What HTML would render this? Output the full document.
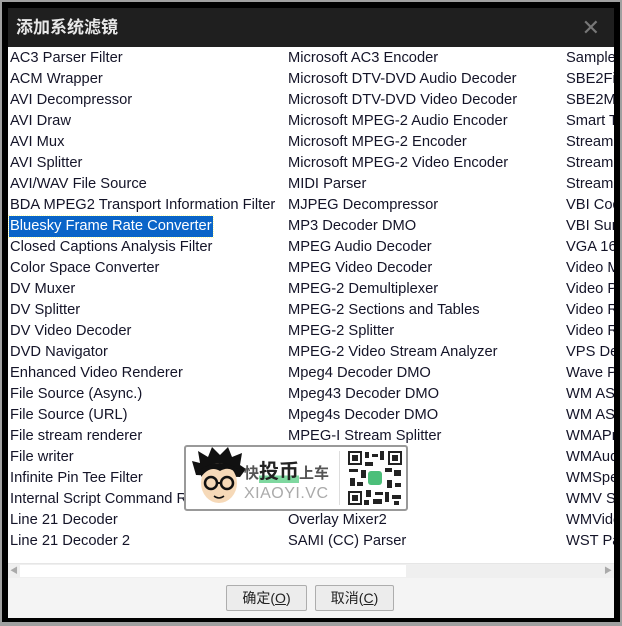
<!DOCTYPE html>
<html><head><meta charset="utf-8"><style>
*{margin:0;padding:0;box-sizing:border-box}
body{width:622px;height:626px;background:#a0a0a0;position:relative;overflow:hidden;font-family:"Liberation Sans","Noto Sans CJK SC",sans-serif}
.frame{position:absolute;left:2px;top:2px;width:618px;height:620px;background:#000}
.title{position:absolute;left:8px;top:8px;width:606px;height:39px;background:#1f1f1f;color:#e8e8e8;font-size:17px;font-weight:bold;line-height:39px;padding-left:8px}
.x{position:absolute;right:14px;top:0;color:#777;font-size:22px;font-weight:normal}
.list{position:absolute;left:8px;top:47px;width:606px;height:516px;background:#fff;overflow:hidden}
.col{position:absolute;top:1px;white-space:nowrap;font-size:14.7px;color:#141428}
.col div{height:21px;line-height:21px;padding-left:2px}
.sel{background:#0a64c8;color:#fff;display:inline-block;outline:1px dotted #ffa;padding:0 1px;margin-left:-1px}
.sb{position:absolute;left:8px;top:563px;width:606px;height:15px;background:#efefef;border-top:1px solid #e6e6e6}
.thumb{position:absolute;left:12px;top:1px;width:386px;height:12px;background:#fff}
.ar{position:absolute;top:1px;width:10px;height:12px;color:#aaa;font-size:8px;line-height:12px;text-align:center}
.bottom{position:absolute;left:8px;top:578px;width:606px;height:40px;background:#f4f4f4}
.btn{position:absolute;top:7px;height:26px;border:1px solid #adadad;background:#ececec;font-size:14px;line-height:24px;text-align:center;color:#222;border-radius:2px}
.wm{position:absolute;left:184px;top:445px;width:224px;height:66px;background:#fff;border:2px solid #999;border-radius:3px}
</style></head><body>
<div class="frame"></div>
<div class="title">添加系统滤镜<span class="x">✕</span></div>
<div class="list">
<div class="col" style="left:0">
<div>AC3 Parser Filter</div><div>ACM Wrapper</div><div>AVI Decompressor</div><div>AVI Draw</div><div>AVI Mux</div><div>AVI Splitter</div><div>AVI/WAV File Source</div><div>BDA MPEG2 Transport Information Filter</div><div><span class="sel">Bluesky Frame Rate Converter</span></div><div>Closed Captions Analysis Filter</div><div>Color Space Converter</div><div>DV Muxer</div><div>DV Splitter</div><div>DV Video Decoder</div><div>DVD Navigator</div><div>Enhanced Video Renderer</div><div>File Source (Async.)</div><div>File Source (URL)</div><div>File stream renderer</div><div>File writer</div><div>Infinite Pin Tee Filter</div><div>Internal Script Command Renderer</div><div>Line 21 Decoder</div><div>Line 21 Decoder 2</div>
</div>
<div class="col" style="left:278px">
<div>Microsoft AC3 Encoder</div><div>Microsoft DTV-DVD Audio Decoder</div><div>Microsoft DTV-DVD Video Decoder</div><div>Microsoft MPEG-2 Audio Encoder</div><div>Microsoft MPEG-2 Encoder</div><div>Microsoft MPEG-2 Video Encoder</div><div>MIDI Parser</div><div>MJPEG Decompressor</div><div>MP3 Decoder DMO</div><div>MPEG Audio Decoder</div><div>MPEG Video Decoder</div><div>MPEG-2 Demultiplexer</div><div>MPEG-2 Sections and Tables</div><div>MPEG-2 Splitter</div><div>MPEG-2 Video Stream Analyzer</div><div>Mpeg4 Decoder DMO</div><div>Mpeg43 Decoder DMO</div><div>Mpeg4s Decoder DMO</div><div>MPEG-I Stream Splitter</div><div>Multi-file Parser</div><div>Null Renderer</div><div>Overlay Mixer</div><div>Overlay Mixer2</div><div>SAMI (CC) Parser</div>
</div>
<div class="col" style="left:556px">
<div>Sample Grabber</div><div>SBE2FileScan</div><div>SBE2MediaTypeProfile</div><div>Smart Tee</div><div>Stream Buffer Sink</div><div>Stream Buffer Source</div><div>StreamBufferSink</div><div>VBI Codec</div><div>VBI Surface Allocator</div><div>VGA 16 Color Ditherer</div><div>Video Mixing Renderer</div><div>Video Port Manager</div><div>Video Renderer</div><div>Video Renderer</div><div>VPS Decoder</div><div>Wave Parser</div><div>WM ASF Reader</div><div>WM ASF Writer</div><div>WMAPro over S/PDIF</div><div>WMAudio Decoder DMO</div><div>WMSpeech Decoder</div><div>WMV Screen</div><div>WMVideo Decoder DMO</div><div>WST Pager</div>
</div>
</div>
<div class="sb"><div class="ar" style="left:1px">◀</div><div class="thumb"></div><div class="ar" style="right:1px">▶</div></div>
<div class="bottom">
<div class="btn" style="left:218px;width:81px">确定(<u>O</u>)</div>
<div class="btn" style="left:307px;width:79px">取消(<u>C</u>)</div>
</div>
<div class="wm">
<svg width="58" height="62" style="position:absolute;left:4px;top:0" viewBox="0 0 58 62">
<path d="M6 28 L2 14 L10 16 L8 4 L18 10 L22 0 L30 8 L38 0 L42 10 L52 6 L50 18 L56 22 L50 30 Z" fill="#111"/>
<ellipse cx="29" cy="36" rx="18" ry="20" fill="#f6d9b8"/>
<path d="M11 30 Q20 18 30 24 Q40 18 48 28 L48 22 Q30 10 11 22 Z" fill="#111"/>
<circle cx="21" cy="36" r="6" fill="none" stroke="#111" stroke-width="2.5"/>
<circle cx="37" cy="36" r="6" fill="none" stroke="#111" stroke-width="2.5"/>
<line x1="27" y1="36" x2="31" y2="36" stroke="#111" stroke-width="2"/>
<path d="M24 49 Q29 53 34 49" stroke="#111" fill="none" stroke-width="1.5"/>
</svg>
<div style="position:absolute;left:58px;top:8px;font-size:15px;font-weight:bold;color:#555;white-space:nowrap">快<span style="font-size:20px;color:#222;background:linear-gradient(transparent 65%,#7fd8a0 65%)">投币</span>上车</div>
<div style="position:absolute;left:58px;top:38px;font-size:16px;color:#aaa;letter-spacing:0.5px">XIAOYI.VC</div>
<div style="position:absolute;left:153px;top:4px;width:1px;height:54px;background:#ddd"></div>
<svg width="56" height="56" style="position:absolute;left:161px;top:3px" viewBox="0 0 56 56">
<rect x="0" y="0" width="56" height="56" fill="#fff"/>
<g fill="#222"><rect x="1" y="1" width="14" height="14"/><rect x="41" y="1" width="14" height="14"/><rect x="1" y="41" width="14" height="14"/></g>
<g fill="#fff"><rect x="3" y="3" width="10" height="10"/><rect x="43" y="3" width="10" height="10"/><rect x="3" y="43" width="10" height="10"/></g>
<g fill="#222"><rect x="5" y="5" width="6" height="6"/><rect x="45" y="5" width="6" height="6"/><rect x="5" y="45" width="6" height="6"/>
<rect x="18" y="2" width="4" height="6"/><rect x="25" y="4" width="6" height="3"/><rect x="33" y="1" width="4" height="9"/><rect x="18" y="12" width="8" height="4"/><rect x="2" y="19" width="9" height="3"/><rect x="14" y="20" width="5" height="8"/><rect x="38" y="18" width="7" height="4"/><rect x="47" y="20" width="7" height="6"/><rect x="3" y="28" width="5" height="8"/><rect x="10" y="32" width="6" height="4"/><rect x="40" y="30" width="5" height="8"/><rect x="48" y="33" width="6" height="4"/><rect x="19" y="40" width="5" height="7"/><rect x="28" y="42" width="8" height="3"/><rect x="38" y="42" width="4" height="10"/><rect x="45" y="45" width="9" height="4"/><rect x="26" y="49" width="9" height="5"/><rect x="17" y="50" width="5" height="5"/><rect x="47" y="51" width="5" height="4"/></g>
<rect x="21" y="21" width="14" height="14" rx="3" fill="#4cbf7a"/>
</svg>
</div>
</body></html>
